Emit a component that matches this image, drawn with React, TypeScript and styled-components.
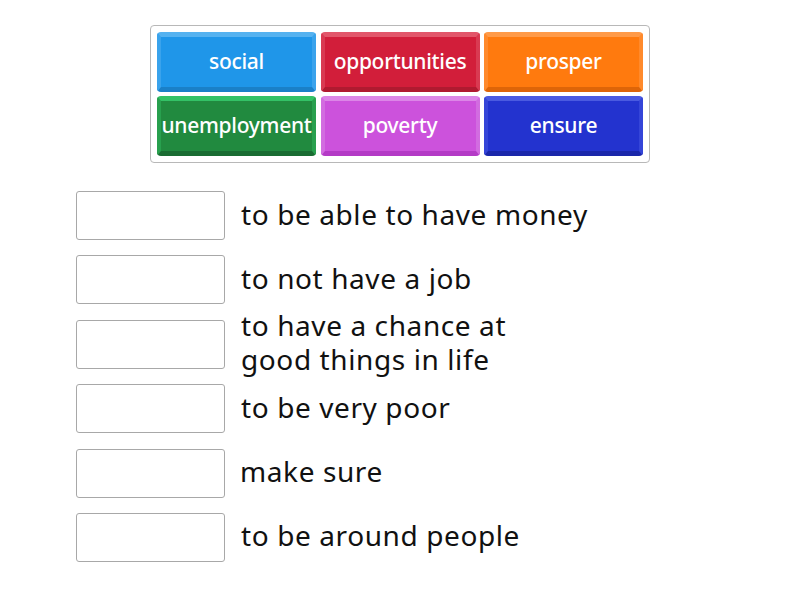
import React from 'react';
import styled, { createGlobalStyle } from 'styled-components';

const GlobalStyle = createGlobalStyle`
  html, body {
    margin: 0;
    padding: 0;
    background: #fff;
  }
  body {
    font-family: 'Noto Sans', 'Open Sans', sans-serif;
  }
`;

interface TileColors {
  face: string;
  top: string;
  side: string;
  bottom: string;
}

const palette: Record<string, TileColors> = {
  blue: { face: '#1f96e9', top: '#55b2f0', side: '#3aa3ec', bottom: '#1a80c8' },
  red: { face: '#d21e3a', top: '#e2566a', side: '#d93a52', bottom: '#b01a30' },
  orange: { face: '#ff7a0e', top: '#ff9a48', side: '#ff8a2c', bottom: '#de6508' },
  green: { face: '#218a3f', top: '#33c266', side: '#28a04e', bottom: '#1a6c32' },
  purple: { face: '#cc52dc', top: '#dc86e7', side: '#d26ce0', bottom: '#b43ac6' },
  navy: { face: '#2333cf', top: '#4a5ae0', side: '#3545d8', bottom: '#1a27aa' },
};

const Page = styled.div`
  width: 800px;
  height: 600px;
  padding-top: 25px;
  box-sizing: border-box;
`;

const TilePanel = styled.div`
  width: 500px;
  margin: 0 auto;
  box-sizing: border-box;
  border: 1px solid #b8b8b8;
  border-radius: 4px;
  padding: 6px;
  display: grid;
  grid-template-columns: repeat(3, 159px);
  grid-auto-rows: 60px;
  column-gap: 4.5px;
  row-gap: 4px;
`;

const Tile = styled.div<{ $c: TileColors }>`
  box-sizing: border-box;
  border-radius: 4px;
  background: ${(p) => p.$c.face};
  border-style: solid;
  border-width: 5px 4px 5px 4px;
  border-color: ${(p) => p.$c.top} ${(p) => p.$c.side} ${(p) => p.$c.bottom}
    ${(p) => p.$c.side};
  display: flex;
  align-items: center;
  justify-content: center;
  padding-bottom: 2px;
  color: #fff;
  font-size: 21px;
  font-weight: 500;
  letter-spacing: -0.3px;
  white-space: nowrap;
  overflow: hidden;
`;

const AnswerList = styled.div`
  display: flex;
  flex-direction: column;
  gap: 15.4px;
  padding-left: 76px;
  margin-top: 28px;
`;

const AnswerRow = styled.div`
  display: flex;
  align-items: center;
  height: 49px;
  gap: 16px;
`;

const DropBox = styled.div`
  flex: none;
  width: 149px;
  height: 49px;
  box-sizing: border-box;
  border: 1px solid #a8a8a8;
  border-radius: 3px;
  background: #fff;
`;

const Definition = styled.div<{ $shift?: number }>`
  font-size: 28px;
  line-height: 34px;
  letter-spacing: 0.6px;
  color: #111;
  padding-bottom: 4px;
  margin-left: ${(p) => p.$shift ?? 0}px;
`;

const tiles = [
  { word: 'social', color: palette.blue },
  { word: 'opportunities', color: palette.red },
  { word: 'prosper', color: palette.orange },
  { word: 'unemployment', color: palette.green },
  { word: 'poverty', color: palette.purple },
  { word: 'ensure', color: palette.navy },
];

const definitions: { text: React.ReactNode; shift?: number }[] = [
  { text: 'to be able to have money' },
  { text: 'to not have a job' },
  {
    text: (
      <>
        to have a chance at
        <br />
        good things in life
      </>
    ),
  },
  { text: 'to be very poor' },
  { text: 'make sure', shift: -1 },
  { text: 'to be around people' },
];

const App = () => (
  <Page>
    <GlobalStyle />
    <TilePanel>
      {tiles.map((t) => (
        <Tile key={t.word} $c={t.color}>
          {t.word}
        </Tile>
      ))}
    </TilePanel>
    <AnswerList>
      {definitions.map((d, i) => (
        <AnswerRow key={i}>
          <DropBox />
          <Definition $shift={d.shift}>{d.text}</Definition>
        </AnswerRow>
      ))}
    </AnswerList>
  </Page>
);

export default App;
